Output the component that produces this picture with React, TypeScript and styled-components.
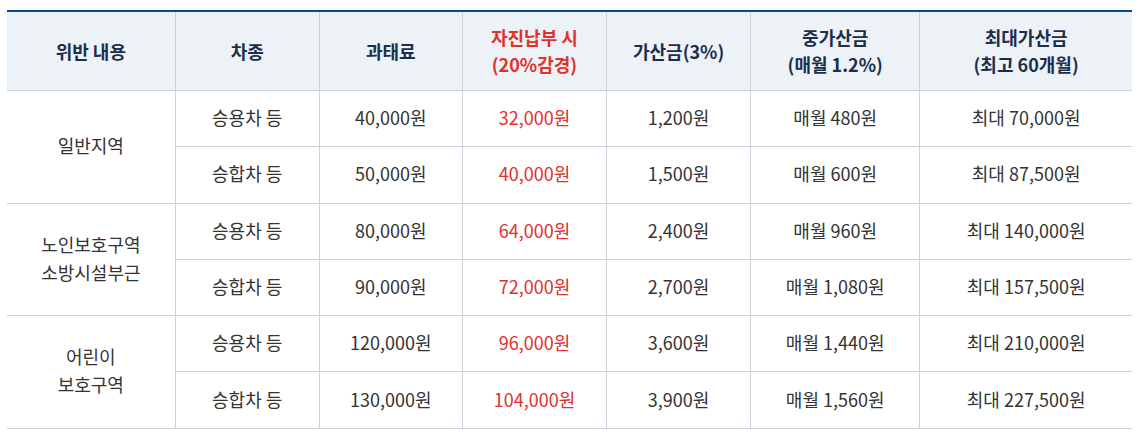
import styled, { createGlobalStyle } from "styled-components";

const GlobalStyle = createGlobalStyle`
  body {
    margin: 0;
    background: #ffffff;
    font-family: "Noto Sans CJK KR", "Noto Sans", sans-serif;
  }
`;

const columns = [
  { label: ["위반 내용"], width: 168 },
  { label: ["차종"], width: 144 },
  { label: ["과태료"], width: 143 },
  { label: ["자진납부 시", "(20%감경)"], width: 144, red: true },
  { label: ["가산금(3%)"], width: 144 },
  { label: ["중가산금", "(매월 1.2%)"], width: 169 },
  { label: ["최대가산금", "(최고 60개월)"], width: 212 },
];

const groups = [
  {
    area: ["일반지역"],
    rows: [
      ["승용차 등", "40,000원", "32,000원", "1,200원", "매월 480원", "최대 70,000원"],
      ["승합차 등", "50,000원", "40,000원", "1,500원", "매월 600원", "최대 87,500원"],
    ],
  },
  {
    area: ["노인보호구역", "소방시설부근"],
    rows: [
      ["승용차 등", "80,000원", "64,000원", "2,400원", "매월 960원", "최대 140,000원"],
      ["승합차 등", "90,000원", "72,000원", "2,700원", "매월 1,080원", "최대 157,500원"],
    ],
  },
  {
    area: ["어린이", "보호구역"],
    rows: [
      ["승용차 등", "120,000원", "96,000원", "3,600원", "매월 1,440원", "최대 210,000원"],
      ["승합차 등", "130,000원", "104,000원", "3,900원", "매월 1,560원", "최대 227,500원"],
    ],
  },
];

function Lines({ lines }: { lines: string[] }) {
  return (
    <>
      {lines.map((line, i) => (
        <span key={i}>
          {i > 0 && <br />}
          {line}
        </span>
      ))}
    </>
  );
}

export default function App() {
  return (
    <Page>
      <GlobalStyle />
      <Table>
        <colgroup>
          {columns.map((col, i) => (
            <col key={i} style={{ width: col.width }} />
          ))}
        </colgroup>
        <thead>
          <tr>
            {columns.map((col, i) => (
              <HeadCell key={i} $red={col.red}>
                <Lines lines={col.label} />
              </HeadCell>
            ))}
          </tr>
        </thead>
        <tbody>
          {groups.map((group, g) =>
            group.rows.map((row, r) => (
              <BodyRow key={`${g}-${r}`}>
                {r === 0 && (
                  <AreaCell rowSpan={group.rows.length}>
                    <Lines lines={group.area} />
                  </AreaCell>
                )}
                {row.map((value, c) => (
                  <Cell key={c} $red={c === 2}>
                    {value}
                  </Cell>
                ))}
              </BodyRow>
            ))
          )}
        </tbody>
      </Table>
    </Page>
  );
}

const Page = styled.div`
  padding: 10px 6px 0 7px;
`;

const Table = styled.table`
  width: 1125px;
  table-layout: fixed;
  border-collapse: collapse;
  border-top: 2px solid #064c8c;
  border-bottom: 1px solid #7f9cba;
`;

const HeadCell = styled.th<{ $red?: boolean }>`
  height: 78px;
  padding: 0;
  background: #edf2f7;
  border-left: 1px solid #c8d1dc;
  border-bottom: 1px solid #c8d1dc;
  font-size: 18px;
  font-weight: 700;
  line-height: 27px;
  letter-spacing: 0;
  text-align: center;
  color: ${({ $red }) => ($red ? "#e2302b" : "#1b2f4d")};

  &:first-child {
    border-left: none;
  }
`;

const BodyRow = styled.tr`
  height: 56.3px;
`;

const Cell = styled.td<{ $red?: boolean }>`
  padding: 0 0 3px;
  border-left: 1px solid #c8d1dc;
  border-bottom: 1px solid #c8d1dc;
  font-size: 18px;
  line-height: 26px;
  letter-spacing: 0;
  text-align: center;
  color: ${({ $red }) => ($red ? "#e2302b" : "#333333")};
`;

const AreaCell = styled(Cell)`
  border-left: none;
  line-height: 28px;
`;
